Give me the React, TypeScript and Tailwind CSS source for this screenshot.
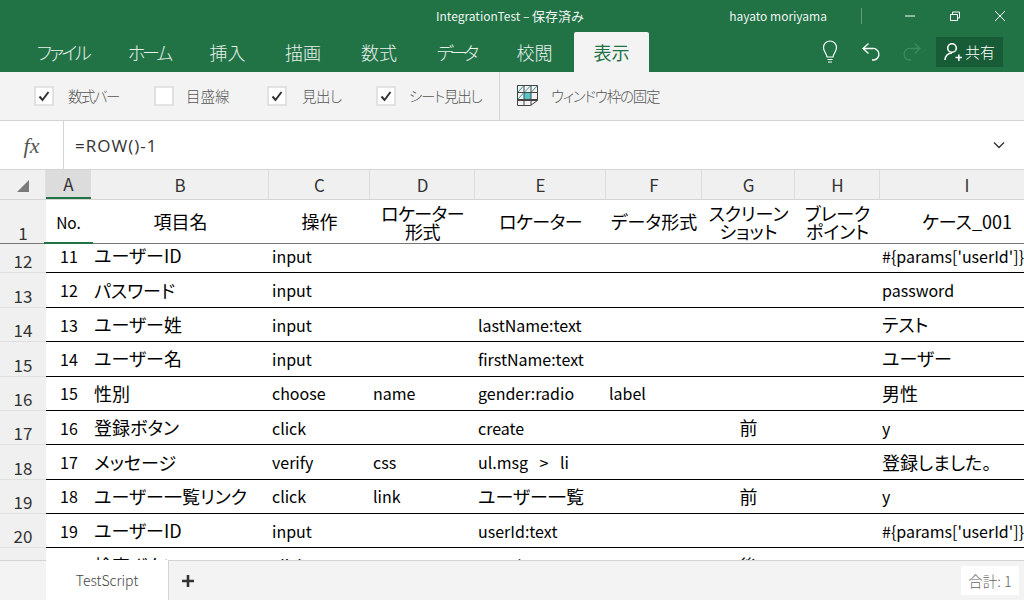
import React from "react";

const cols = "grid grid-cols-[46px_45px_178px_101px_105px_131px_96px_93px_85px_174px]";

const rows: string[][] = [
  ["12", "11", "ユーザーID", "input", "", "", "", "", "", "#{params['userId']}"],
  ["13", "12", "パスワード", "input", "", "", "", "", "", "password"],
  ["14", "13", "ユーザー姓", "input", "", "lastName:text", "", "", "", "テスト"],
  ["15", "14", "ユーザー名", "input", "", "firstName:text", "", "", "", "ユーザー"],
  ["16", "15", "性別", "choose", "name", "gender:radio", "label", "", "", "男性"],
  ["17", "16", "登録ボタン", "click", "", "create", "", "前", "", "y"],
  ["18", "17", "メッセージ", "verify", "css", "ul.msg > li", "", "", "", "登録しました。"],
  ["19", "18", "ユーザー一覧リンク", "click", "link", "ユーザー一覧", "", "前", "", "y"],
  ["20", "19", "ユーザーID", "input", "", "userId:text", "", "", "", "#{params['userId']}"],
  ["21", "20", "検索ボタン", "click", "", "search", "", "後", "", "y"],
];

const isCjk = (s: string) => /[\u3040-\u30ff\u4e00-\u9fff]/.test(s);
const size = (s: string) => (isCjk(s) ? "text-[18px]" : s.includes(">") ? "text-[16px] [word-spacing:8px]" : "text-[16px]");

function Check({ on }: { on: boolean }) {
  return (
    <span className="flex h-[20px] w-[20px] items-center justify-center border-2 border-[#e2e2e2] bg-white">
      {on && (
        <svg width="14" height="14" viewBox="0 0 14 14">
          <path d="M2.5 7.5 L5.5 11 L11.5 3" fill="none" stroke="#333" strokeWidth="2" />
        </svg>
      )}
    </span>
  );
}

function Opt({ on, label, gap, w, track }: { on: boolean; label: string; gap: string; w: string; track: string }) {
  return (
    <div className={`flex items-center ${gap} ${w}`}>
      <Check on={on} />
      <span className={`text-[14.5px] font-light text-[#555] ${track}`}>{label}</span>
    </div>
  );
}

function Tab({ label, w, track }: { label: string; w: string; track: string }) {
  return <div className={`${w} ${track} flex h-[40px] items-center justify-center text-[18px] font-light text-white/90`}>{label}</div>;
}

export default function App() {
  return (
    <div className={`flex h-[600px] w-[1024px] flex-col overflow-hidden bg-white font-['Noto_Sans_CJK_JP',sans-serif] [font-feature-settings:"palt"]`}>
      {/* Title + tabs */}
      <div className="flex h-[72px] shrink-0 flex-col bg-[#217346] text-white">
        <div className="flex h-[32px] items-center">
          <div className="flex-1 pl-[436px] text-[12px] text-white/95">
            IntegrationTest – <span className="text-[13px]">保存済み</span>
          </div>
          <div className="mr-[34px] text-[12px] text-white/95">hayato moriyama</div>
          <div className="h-[16px] w-px bg-white/30" />
          <div className="ml-[41px] mr-[17px] flex items-center gap-[31px]">
            <svg width="14" height="14" viewBox="0 0 14 14"><path d="M2 7h10" stroke="#fff" strokeWidth="1" /></svg>
            <svg width="14" height="14" viewBox="0 0 14 14" fill="none" stroke="#fff"><path d="M2.5 5.5h7v6h-7zM4.5 5.5v-2.5h7v6h-2" /></svg>
            <svg width="14" height="14" viewBox="0 0 14 14" fill="none" stroke="#fff"><path d="M2 2l10 10M12 2L2 12" /></svg>
          </div>
        </div>
        <div className="flex h-[40px] items-end">
          <div className="flex items-end pl-[18px]">
            <Tab label="ファイル" w="w-[90px]" track="tracking-[-2.5px]" />
            <Tab label="ホーム" w="w-[82px]" track="tracking-[-3px]" />
            <Tab label="挿入" w="w-[75px]" track="tracking-normal" />
            <Tab label="描画" w="w-[76px]" track="tracking-normal" />
            <Tab label="数式" w="w-[76px]" track="tracking-normal" />
            <Tab label="データ" w="w-[78px]" track="tracking-[-4px]" />
            <Tab label="校閲" w="w-[79px]" track="tracking-normal" />
            <div className="flex h-[40px] w-[75px] items-center justify-center rounded-t-[2px] bg-[#f3f3f3] text-[18px] text-[#217346]">
              表示
            </div>
          </div>
          <div className="ml-[171px] flex h-[40px] items-center gap-[21px]">
            <svg width="20" height="26" viewBox="0 0 20 26" fill="none" stroke="#fff" strokeWidth="1.2">
              <path d="M7 18c0-3-3.5-5-3.5-9.500a6.500 6.500 0 0 1 13 0c0 4.500-3.500 6.500-3.500 9.500zM7.500 20.500h5M8 23h4" />
            </svg>
            <svg width="20" height="20" viewBox="0 0 20 20" fill="none" stroke="#fff" strokeWidth="1.3">
              <path d="M7.500 1.500L2 6.500l5.500 5M2 6.500h9.500a5.800 5.800 0 0 1 1.500 11.500h-2" />
            </svg>
            <svg width="20" height="20" viewBox="0 0 20 20" fill="none" stroke="#3c8a60" strokeWidth="1.3">
              <path d="M12.500 1.500L18 6.500l-5.500 5M18 6.500H8.500a5.800 5.800 0 0 0-1.500 11.500h2" />
            </svg>
            <div className="ml-[-7px] flex h-[30px] w-[67px] items-center justify-center gap-[3px] bg-[#185c37] text-[15px] font-light">
              <svg width="18" height="20" viewBox="0 0 18 20" fill="none" stroke="#fff" strokeWidth="1.6">
                <circle cx="8" cy="6" r="4.300" />
                <path d="M1 18c0-4 3-7 7-7M11.500 15.500h6.500M14.800 12.500v6.500" />
              </svg>
              共有
            </div>
          </div>
        </div>
      </div>

      {/* Ribbon */}
      <div className="flex h-[49px] shrink-0 items-center border-b border-[#d4d4d4] bg-[#f3f3f3]">
        <div className="flex h-full items-center pl-[34px]">
          <Opt on label="数式バー" gap="gap-[14px]" w="w-[120px]" track="tracking-[-1.5px]" />
          <Opt on={false} label="目盛線" gap="gap-[12px]" w="w-[113px]" track="tracking-normal" />
          <Opt on label="見出し" gap="gap-[15px]" w="w-[109px]" track="tracking-[-0.5px]" />
          <Opt on label="シート見出し" gap="gap-[13px]" w="w-[123px]" track="tracking-[-1.300px]" />
        </div>
        <div className="h-full w-px bg-[#d4d4d4]" />
        <div className="ml-[16px] flex items-center gap-[12px]">
          <svg width="23" height="22" viewBox="0 0 23 22" fill="none" stroke="#444" strokeWidth="1">
            <rect x="8" y="7" width="7" height="7" fill="#55c6c6" stroke="none" />
            <path d="M1.500 0.500h20v15h-20zM1.500 7.500h20M1.500 14.500h20M8 0.500v20M15 0.500v20M1.500 0.500v20h13l7-5" />
            <path d="M2 7L7.500 1M8.500 7L14.500 1M15.500 7l5.500-6M2 14L7.500 8" stroke="#2a9a9a" />
          </svg>
          <span className="text-[14.5px] font-light tracking-[-1.200px] text-[#555]">ウィンドウ枠の固定</span>
        </div>
      </div>

      {/* Formula bar */}
      <div className="flex h-[48px] shrink-0 items-center bg-white">
        <div className="flex h-full w-[64px] items-center justify-center border-r border-[#d4d4d4] font-['Liberation_Serif',serif] text-[22px] italic text-[#555]">
          fx
        </div>
        <div className="flex-1 pl-[11px] pt-[2px] font-['Open_Sans',sans-serif] text-[17px] tracking-[1px] text-[#333]">=ROW()-1</div>
        <svg className="mr-[19px]" width="12" height="8" viewBox="0 0 12 8" fill="none" stroke="#333" strokeWidth="1.4"><path d="M1 1.500l5 5 5-5" /></svg>
      </div>

      {/* Column headers */}
      <div className={`${cols} h-[31px] shrink-0 border-y border-[#d4d4d4] bg-[#f0f0f0] text-[17px] text-[#333]`}>
        <div className="relative border-r border-[#e0e0e0]">
          <svg className="absolute left-[16px] top-[9px]" width="14" height="14" viewBox="0 0 14 14"><path d="M13 1v12H1z" fill="#7a7a7a" /></svg>
        </div>
        <div className="flex items-center justify-center border-b-2 border-[#217346] bg-[#dcdcdc]">A</div>
        {["B", "C", "D", "E", "F", "G", "H", "I"].map((c) => (
          <div key={c} className="flex items-center justify-center border-r border-[#dcdcdc] pl-[1px]">{c}</div>
        ))}
      </div>

      {/* Sheet */}
      <div className="relative min-h-0 flex-1 overflow-hidden">
        <div className={`${cols} relative z-10 h-[44px] border-b border-[#777] bg-white text-[18px] text-black`}>
          <div className="flex items-end justify-center bg-[#f0f0f0] pb-[1px] text-[17px] leading-[18px] text-[#333]">1</div>
          <div className="relative flex items-center justify-center pt-[3px] text-[15.500px]">
            No.
            <span className="absolute bottom-[-1px] left-[-2px] right-[-2px] h-[2px] bg-[#217346]" />
          </div>
          <div className="flex items-center justify-center pl-[1px]">項目名</div>
          <div className="flex items-center justify-center">操作</div>
          <div className="flex items-center justify-center text-center leading-[18px] tracking-[-0.5px]">ロケーター<br />形式</div>
          <div className="flex items-center justify-center tracking-[-0.5px]">ロケーター</div>
          <div className="flex items-center justify-center">データ形式</div>
          <div className="flex items-center justify-center text-center leading-[18px]">スクリーン<br />ショット</div>
          <div className="flex items-center justify-center text-center leading-[18px]">ブレーク<br />ポイント</div>
          <div className="flex items-center justify-center">ケース_001</div>
        </div>
        <div className="mt-[-4.925px]">
          {rows.map((r) => (
            <div key={r[0]} className={`${cols} h-[34.375px] text-black`}>
              <div className="flex items-end justify-center border-b border-[#e0e0e0] bg-[#f0f0f0] pb-[2px] text-[17px] leading-[18px] text-[#333]">{r[0]}</div>
              <div className="flex items-center justify-center border-b border-black pl-[1px] text-[16px]">{r[1]}</div>
              {[2, 3, 4, 5, 6].map((i) => (
                <div key={i} className={`flex items-center whitespace-nowrap border-b border-black pl-[3px] ${size(r[i])}`}>{r[i]}</div>
              ))}
              <div className="flex items-center justify-center border-b border-black text-[18px]">{r[7]}</div>
              <div className="flex items-center border-b border-black pl-[3px] text-[16px]">{r[8]}</div>
              <div className={`flex items-center whitespace-nowrap border-b border-black pl-[2px] ${size(r[9])}`}>{r[9]}</div>
            </div>
          ))}
        </div>
      </div>

      {/* Sheet tabs */}
      <div className="relative z-10 flex h-[40px] shrink-0 items-stretch border-t border-[#d4d4d4] bg-[#f3f3f3]">
        <div className="w-[46px]" />
        <div className="mt-[-1px] flex w-[123px] items-center justify-center border-r border-[#d4d4d4] bg-white text-[14px] font-light text-[#444]">
          TestScript
        </div>
        <div className="ml-[12px] flex items-center">
          <svg width="14" height="14" viewBox="0 0 14 14"><path d="M7 1v12M1 7h12" stroke="#333" strokeWidth="2.600" /></svg>
        </div>
        <div className="flex-1" />
        <div className="mb-[5px] mr-[5px] mt-[5px] flex w-[58px] items-center justify-center bg-white text-[14.500px] font-light text-[#666]">
          合計: 1
        </div>
      </div>
    </div>
  );
}
